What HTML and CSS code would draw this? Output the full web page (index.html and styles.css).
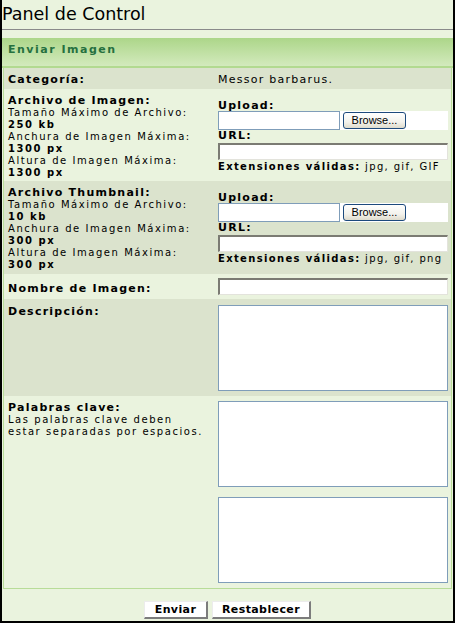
FILE: index.html
```html
<!DOCTYPE html>
<html lang="es">
<head>
    <meta charset="UTF-8">
    <meta name="viewport" content="width=device-width, initial-scale=1.0">
    <title>Panel de Control - Enviar Imagen</title>
    <link rel="stylesheet" href="styles.css">
</head>
<body>
    <div class="frame">
        <h1 class="page-title">Panel de Control</h1>

        <form class="upload-form" action="#" method="post">
            <div class="form-head">Enviar Imagen</div>
            <table class="form-table">
                <colgroup>
                    <col class="col-label">
                    <col class="col-field">
                </colgroup>
                <tr class="row-alt row-cat">
                    <td class="label"><span class="label-title">Categoría:</span></td>
                    <td class="value">Messor barbarus.</td>
                </tr>
                <tr class="row-image">
                    <td class="label">
                        <div class="label-title">Archivo de Imagen:</div>
                        <div class="label-note">
                            Tamaño Máximo de Archivo:<br><b>250 kb</b><br>
                            Anchura de Imagen Máxima:<br><b>1300 px</b><br>
                            Altura de Imagen Máxima:<br><b>1300 px</b>
                        </div>
                    </td>
                    <td class="field file-cell">
                        <div class="field-label upload-label">Upload:</div>
                        <div class="file-field">
                            <input type="text" class="file-path" name="image_file">
                            <button type="button" class="browse-btn">Browse...</button>
                        </div>
                        <div class="field-label">URL:</div>
                        <input type="text" class="text-input url-input" name="image_url">
                        <div class="ext-note"><b>Extensiones válidas:</b> jpg, gif, GIF</div>
                    </td>
                </tr>
                <tr class="row-alt row-thumb">
                    <td class="label">
                        <div class="label-title">Archivo Thumbnail:</div>
                        <div class="label-note">
                            Tamaño Máximo de Archivo:<br><b>10 kb</b><br>
                            Anchura de Imagen Máxima:<br><b>300 px</b><br>
                            Altura de Imagen Máxima:<br><b>300 px</b>
                        </div>
                    </td>
                    <td class="field file-cell">
                        <div class="field-label upload-label">Upload:</div>
                        <div class="file-field">
                            <input type="text" class="file-path" name="thumb_file">
                            <button type="button" class="browse-btn">Browse...</button>
                        </div>
                        <div class="field-label">URL:</div>
                        <input type="text" class="text-input url-input" name="thumb_url">
                        <div class="ext-note"><b>Extensiones válidas:</b> jpg, gif, png</div>
                    </td>
                </tr>
                <tr class="row-name">
                    <td class="label name-label"><span class="label-title">Nombre de Imagen:</span></td>
                    <td class="field name-cell"><input type="text" class="text-input" name="title"></td>
                </tr>
                <tr class="row-alt row-desc">
                    <td class="label desc-label"><span class="label-title">Descripción:</span></td>
                    <td class="field desc-cell"><textarea class="text-area" name="description"></textarea></td>
                </tr>
                <tr class="row-keys">
                    <td class="label">
                        <div class="label-title">Palabras clave:</div>
                        <div class="label-note">Las palabras clave deben<br>estar separadas por espacios.</div>
                    </td>
                    <td class="field">
                        <textarea class="text-area keys-area" name="keywords"></textarea>
                        <textarea class="text-area" name="keywords_extra"></textarea>
                    </td>
                </tr>
            </table>

            <div class="form-actions">
                <button type="submit" class="form-btn">Enviar</button>
                <button type="reset" class="form-btn">Restablecer</button>
            </div>
        </form>
    </div>
</body>
</html>
```

FILE: styles.css
```css
:root {
    --page-bg: #eaf3de;
    --row-alt: #dbe3cd;
    --table-line: #b8dc98;
    --head-text: #25703f;
    --field-line: #7f9db9;
}

* {
    box-sizing: border-box;
}

body {
    margin: 0;
    background-color: var(--page-bg);
    color: #000;
    font-family: 'DejaVu Sans', Verdana, sans-serif;
    font-size: 11px;
}

.frame {
    width: 455px;
    height: 623px;
    border: 2px solid #000;
    border-top: 0;
    background-color: var(--page-bg);
}

.page-title {
    margin: 0;
    height: 30px;
    padding: 3px 0 0;
    border-bottom: 1px solid #8a8a8a;
    font-size: 17.5px;
    font-weight: normal;
    line-height: 22px;
}

.upload-form {
    margin: 8px 0 0;
}

.form-head {
    height: 30px;
    padding: 4px 6px 0;
    border-bottom: 2px solid #b2da90;
    background: linear-gradient(#acd689, #d3eabd);
    color: var(--head-text);
    font-weight: bold;
    line-height: 16px;
    letter-spacing: 1.5px;
}

.form-table {
    width: 449px;
    margin: 0 1px;
    border: 1px solid var(--table-line);
    border-top: 0;
    border-spacing: 0;
    table-layout: fixed;
}

.col-label {
    width: 210px;
}

.col-field {
    width: 237px;
}

.form-table td {
    padding: 5px 3px 0 4px;
    vertical-align: top;
    letter-spacing: 1.25px;
    line-height: 13px;
}

.row-alt {
    background-color: var(--row-alt);
}

.row-cat { height: 21px; }
.row-image { height: 92px; }
.row-thumb { height: 93px; }
.row-name { height: 25px; }
.row-desc { height: 97px; }
.row-keys { height: 192px; }

.label-title {
    font-weight: bold;
}

.label-note {
    font-size: 10px;
    line-height: 12px;
    letter-spacing: 1.55px;
}

.form-table td.file-cell {
    padding-top: 11px;
}

.form-table td.name-label {
    padding-top: 8px;
}

.form-table td.name-cell {
    padding-top: 4px;
}

.form-table td.desc-label,
.form-table td.desc-cell {
    padding-top: 6px;
}

.field-label {
    font-weight: bold;
    line-height: 12px;
}

.upload-label {
    line-height: 11px;
}

.file-field {
    display: flex;
    width: 230px;
    height: 19px;
    background-color: #fff;
}

.file-path {
    width: 122px;
    height: 19px;
    margin: 0;
    padding: 0 2px;
    border: 1px solid var(--field-line);
    font: inherit;
}

.browse-btn {
    width: 63px;
    height: 17px;
    margin: 1px 0 0 3px;
    padding: 0;
    border: 1px solid #1d4a7d;
    border-radius: 3px;
    background: linear-gradient(#fff, #f3f2ec 60%, #dedbcc);
    color: #000;
    font-family: 'Liberation Sans', Arial, sans-serif;
    font-size: 11px;
    letter-spacing: 0;
    line-height: 15px;
}

.text-input {
    display: block;
    width: 230px;
    height: 17px;
    margin: 0;
    padding: 0 2px;
    border-style: solid;
    border-width: 2px 1px 1px 2px;
    border-color: #7b7b73 #e3e3dc #e3e3dc #7b7b73;
    background-color: #fff;
    font: inherit;
}

.url-input {
    margin-top: 1px;
}

.ext-note {
    margin-top: 1px;
    font-size: 10px;
    line-height: 12px;
    letter-spacing: 1.35px;
}

.text-area {
    display: block;
    width: 230px;
    height: 86px;
    margin: 0;
    padding: 2px;
    border: 1px solid var(--field-line);
    background-color: #fff;
    font: inherit;
    resize: none;
}

.keys-area {
    margin-bottom: 10px;
}

.form-actions {
    display: flex;
    justify-content: center;
    gap: 4px;
    padding-top: 12px;
}

.form-btn {
    height: 18px;
    padding: 0 8px;
    border-style: solid;
    border-width: 1px 2px 2px 1px;
    border-color: #ececec #7c7c7c #7c7c7c #ececec;
    background-color: #fff;
    color: #000;
    font-family: 'DejaVu Sans', Verdana, sans-serif;
    font-size: 11px;
    font-weight: bold;
    letter-spacing: 0.4px;
    line-height: 14px;
}

.form-btn:first-child {
    width: 64px;
}

.form-btn:last-child {
    width: 99px;
}
```
